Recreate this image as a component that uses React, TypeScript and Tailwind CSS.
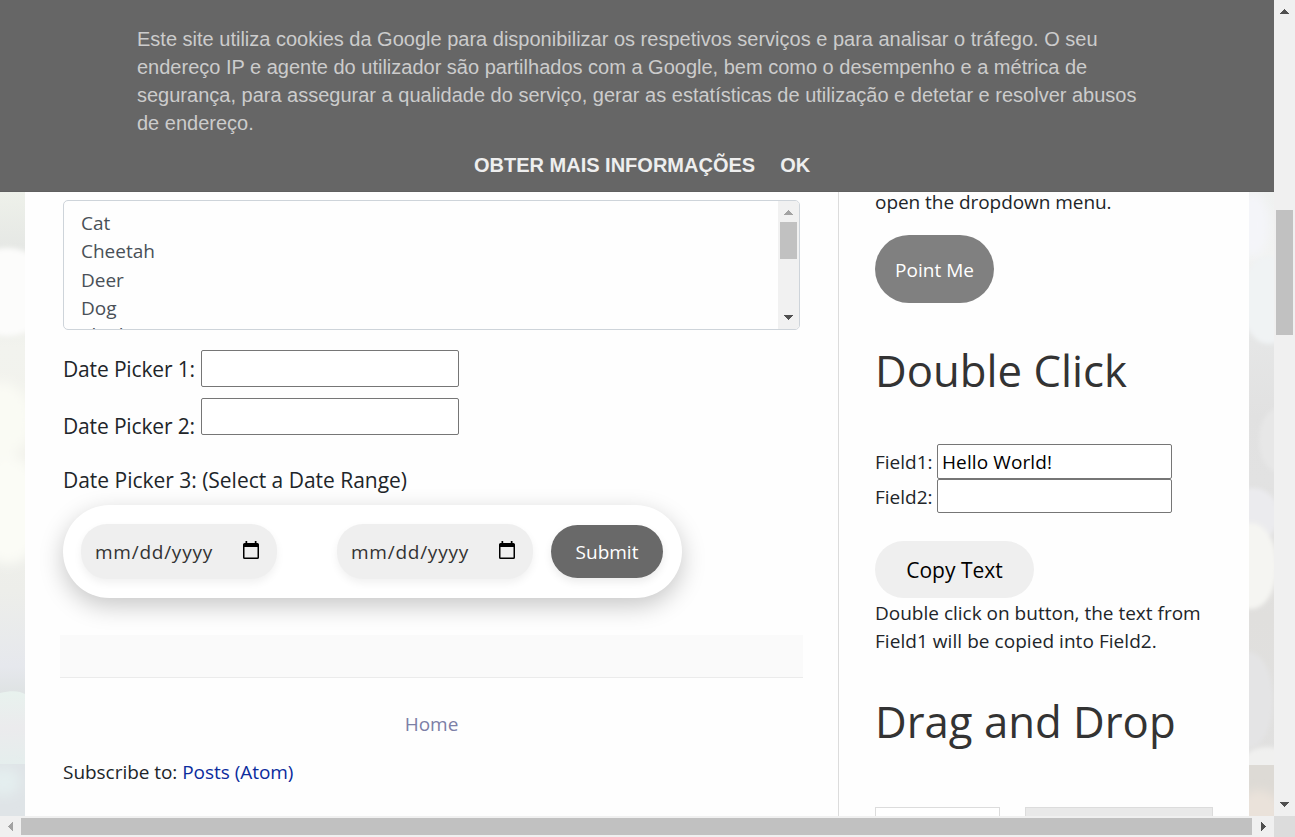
import type { ReactNode } from 'react';

const animals = ['Cat', 'Cheetah', 'Deer', 'Dog'];

function Arrow({ dir, className }: { dir: 'up' | 'down' | 'left' | 'right'; className: string }) {
  const shapes = {
    up: 'M4 0h1v1h1v1h1v1h1v1h1v1H0V4h1V3h1V2h1V1h1z',
    down: 'M0 0h9v1H8v1H7v1H6v1H5v1H4V4H3V3H2V2H1V1H0z',
    left: 'M5 0v9H4V8H3V7H2V6H1V5H0V4h1V3h1V2h1V1h1V0z',
    right: 'M0 0v9h1V8h1V7h1V6h1V5h1V4H4V3H3V2H2V1H1V0z',
  };
  const flat = dir === 'up' || dir === 'down';
  return (
    <svg
      width={flat ? 9 : 5}
      height={flat ? 5 : 9}
      shapeRendering="crispEdges"
      fill="currentColor"
      className={`shrink-0 ${className}`}
    >
      <path d={shapes[dir]} />
    </svg>
  );
}

function CalendarIcon() {
  return (
    <svg width="16" height="18" viewBox="0 0 16 18" fill="none" className="mb-[3px]">
      <path d="M2.5 0h1.7v2h7.6V0h1.7v2H14.4A1.6 1.6 0 0 1 16 3.6v12.8a1.6 1.6 0 0 1-1.6 1.6H1.6A1.6 1.6 0 0 1 0 16.4V3.6A1.6 1.6 0 0 1 1.6 2h.9zM1.5 6v10.5h13V6z" fill="black" />
    </svg>
  );
}

function DateField() {
  return (
    <div className="flex h-[55px] w-[196px] items-center justify-between rounded-[26px] bg-[#efefef] pl-[14px] pr-[18px] text-[19px] tracking-[0.75px] text-[#333] shadow-[0_4px_8px_rgba(0,0,0,0.06)]">
      <span className="pt-[2px]">mm/dd/yyyy</span>
      <CalendarIcon />
    </div>
  );
}

function Heading({ children }: { children: ReactNode }) {
  return <h2 className="h-[60px] text-[43.7px] leading-[60px] text-[#333]">{children}</h2>;
}

function LeftBackdrop() {
  return (
    <svg width="25" height="624" viewBox="0 192 25 624" className="shrink-0">
      <defs>
        <linearGradient id="lb" x1="0" y1="0" x2="0" y2="1">
          <stop offset="0" stopColor="#eef1ea" />
          <stop offset="0.085" stopColor="#e6e8e5" />
          <stop offset="0.25" stopColor="#f2f3ee" />
          <stop offset="0.42" stopColor="#f2f2ec" />
          <stop offset="0.64" stopColor="#edeeea" />
          <stop offset="0.76" stopColor="#e6e8ed" />
          <stop offset="0.8" stopColor="#dfe3e4" />
          <stop offset="1" stopColor="#dfe2e4" />
        </linearGradient>
        <linearGradient id="lc" x1="0" y1="0" x2="0" y2="1">
          <stop offset="0" stopColor="#e8f2ee" />
          <stop offset="0.5" stopColor="#ebebed" />
          <stop offset="1" stopColor="#e5eeed" />
        </linearGradient>
        <filter id="ls" x="-40%" y="-40%" width="180%" height="180%">
          <feGaussianBlur stdDeviation="2.5" />
        </filter>
        <filter id="lw" x="-60%" y="-60%" width="220%" height="220%">
          <feGaussianBlur stdDeviation="6" />
        </filter>
      </defs>
      <rect y="192" width="25" height="624" fill="url(#lb)" />
      <ellipse cx="7" cy="292" rx="44" ry="44" fill="#fcfcfb" filter="url(#ls)" />
      <g filter="url(#lw)">
        <ellipse cx="0" cy="420" rx="32" ry="38" fill="#fafbf4" />
        <ellipse cx="8" cy="510" rx="36" ry="54" fill="#fbfcf6" />
      </g>
      <path d="M0 693C12 690 20 691 25 694V764H0z" fill="url(#lc)" />
      <rect y="764" width="25" height="52" fill="#dfe4e7" />
      <ellipse cx="4" cy="782" rx="16" ry="14" fill="#e4eeef" filter="url(#lw)" />
    </svg>
  );
}

function RightBackdrop() {
  return (
    <svg width="25" height="624" viewBox="0 192 25 624" className="shrink-0">
      <defs>
        <linearGradient id="rb" x1="0" y1="0" x2="0" y2="1">
          <stop offset="0" stopColor="#eff1f0" />
          <stop offset="0.1" stopColor="#f2f3f2" />
          <stop offset="0.22" stopColor="#e6e7e7" />
          <stop offset="0.36" stopColor="#e1e1e1" />
          <stop offset="0.46" stopColor="#e2e2e2" />
          <stop offset="0.68" stopColor="#e0dfdd" />
          <stop offset="1" stopColor="#e1e1e1" />
        </linearGradient>
        <filter id="rs" x="-40%" y="-40%" width="180%" height="180%">
          <feGaussianBlur stdDeviation="2" />
        </filter>
        <filter id="rw" x="-60%" y="-60%" width="220%" height="220%">
          <feGaussianBlur stdDeviation="5" />
        </filter>
      </defs>
      <rect y="192" width="25" height="624" fill="url(#rb)" />
      <ellipse cx="4" cy="225" rx="16" ry="32" fill="#f4f5f9" filter="url(#rw)" />
      <g filter="url(#rs)">
        <ellipse cx="20" cy="300" rx="28" ry="44" fill="#f0f3f4" />
        <ellipse cx="30" cy="440" rx="20" ry="32" fill="#e7e7e7" />
        <ellipse cx="4" cy="515" rx="26" ry="27" fill="#ebebee" />
        <ellipse cx="2" cy="566" rx="26" ry="43" fill="#f5f5f2" />
        <ellipse cx="0" cy="700" rx="24" ry="48" fill="#e4e4e5" />
        <ellipse cx="18" cy="766" rx="26" ry="19" fill="#f0f0ef" />
      </g>
      <rect y="765" width="25" height="51" fill="#dddad5" />
      <ellipse cx="10" cy="812" rx="22" ry="22" fill="#eae2da" filter="url(#rw)" />
    </svg>
  );
}

function CookieBanner() {
  return (
    <div className="h-[192px] w-[1274px] shrink-0 border-b border-[#606060] bg-[#666] pl-[137px] pt-[25px] font-['Liberation_Sans',sans-serif] text-[20px] leading-[28px] text-[#ccc]">
      <p className="w-[1000px] whitespace-nowrap">
        Este site utiliza cookies da Google para disponibilizar os respetivos serviços e para analisar o tráfego. O seu
        <br />
        endereço IP e agente do utilizador são partilhados com a Google, bem como o desempenho e a métrica de
        <br />
        segurança, para assegurar a qualidade do serviço, gerar as estatísticas de utilização e detetar e resolver abusos
        <br />
        de endereço.
      </p>
      <div className="mt-[14px] flex gap-[25px] pl-[337px] font-bold text-[#eee]">
        <a>OBTER MAIS INFORMAÇÕES</a>
        <a>OK</a>
      </div>
    </div>
  );
}

function AnimalList() {
  return (
    <div className="flex h-[130px] w-[737px] shrink-0 overflow-hidden rounded-[5px] border border-[#ced4da]">
      <div className="flex-1 pl-[17px] pt-[8px] text-[19px] leading-[28.4px] text-[#495057]">
        {animals.map((a) => (
          <div key={a}>{a}</div>
        ))}
        <div className="-mt-[2px]">Elephant</div>
      </div>
      <div className="flex w-[21px] flex-col items-center bg-[#f1f1f1]">
        <Arrow dir="up" className="mt-[9px] text-[#a3a3a3]" />
        <div className="mt-[7px] h-[37px] w-[17px] bg-[#c1c1c1]" />
        <Arrow dir="down" className="mb-[9px] mt-auto text-[#505050]" />
      </div>
    </div>
  );
}

function MainColumn() {
  return (
    <main className="flex w-[813px] shrink-0 flex-col pl-[38px] pt-[8px] text-[#212529]">
      <AnimalList />
      <div className="mt-[20px] flex h-[37px] shrink-0 text-[21px] leading-[37px]">
        <label className="w-[138px] pt-px tracking-[-0.15px]">Date Picker 1:</label>
        <div className="h-[37px] w-[258px] rounded-[2px] border border-[#767676] bg-white" />
      </div>
      <div className="mt-[11px] flex h-[46px] shrink-0 text-[21px] leading-[37px]">
        <label className="w-[138px] pt-[10px] tracking-[-0.15px]">Date Picker 2:</label>
        <div className="h-[37px] w-[258px] rounded-[2px] border border-[#767676] bg-white" />
      </div>
      <p className="mt-[20px] h-[32px] text-[21px] leading-[32px] tracking-[-0.02px]">
        Date Picker 3: (Select a Date Range)
      </p>
      <div className="mt-[9px] flex h-[93px] w-[619px] shrink-0 items-center rounded-full bg-white pl-[18px] shadow-[0_8px_25px_rgba(0,0,0,0.22)]">
        <DateField />
        <div className="w-[60px]" />
        <DateField />
        <button className="ml-[18px] h-[53px] w-[112px] rounded-full bg-[#696969] pt-[2px] text-[19px] text-white shadow-[0_4px_8px_rgba(0,0,0,0.08)]">
          Submit
        </button>
      </div>
      <div className="-ml-[3px] mt-[37px] h-[43px] w-[743px] shrink-0 border-b border-[#ebebeb] bg-[#fafafa]" />
      <a className="mt-[32px] w-[737px] text-center text-[19px] leading-[28px] text-[#7c7fa6]">Home</a>
      <p className="mt-[20px] text-[19px] leading-[28px] tracking-[-0.04px]">
        Subscribe to: <a className="text-[#0b2c9d]">Posts (Atom)</a>
      </p>
    </main>
  );
}

function SideColumn() {
  return (
    <aside className="-mt-[4px] flex w-[411px] flex-col items-start border-l border-[#dcdcdc] pl-[36px] text-[19px] leading-[28px] text-[#212529]">
      <p className="tracking-[-0.05px]">open the dropdown menu.</p>
      <button className="mt-[19px] h-[68px] w-[119px] shrink-0 rounded-full bg-[#808080] pt-[2px] text-white">
        Point Me
      </button>
      <div className="mt-[37px]">
        <Heading>Double Click</Heading>
      </div>
      <div className="mt-[44px] flex h-[35px] leading-[35px]">
        <label className="w-[62px] pt-px">Field1:</label>
        <div className="w-[235px] rounded-[2px] border border-[#767676] bg-white pl-[4px] pt-px leading-[33px] tracking-[0.1px] text-black">
          Hello World!
        </div>
      </div>
      <div className="flex h-[34px] leading-[35px]">
        <label className="w-[62px] pt-px">Field2:</label>
        <div className="w-[235px] rounded-[2px] border border-[#767676] bg-white" />
      </div>
      <button className="mt-[28px] h-[57px] w-[159px] shrink-0 rounded-full bg-[#efefef] text-[21px] text-black">
        Copy Text
      </button>
      <p className="mt-px whitespace-nowrap">
        Double click on button, the text from
        <br />
        <span className="tracking-[0.05px]">Field1 will be copied into Field2.</span>
      </p>
      <div className="mt-[36px]">
        <Heading>Drag and Drop</Heading>
      </div>
      <div className="mt-[56px] flex gap-[25px]">
        <div className="h-[60px] w-[125px] border border-[#dcdcdc] bg-white" />
        <div className="h-[60px] w-[188px] border border-[#dcdcdc] bg-[#e9e9e9]" />
      </div>
    </aside>
  );
}

export default function App() {
  return (
    <div className="grid h-[837px] w-[1295px] grid-cols-[1274px_21px] grid-rows-[816px_21px] overflow-hidden bg-white font-['Open_Sans','Noto_Sans',sans-serif]">
      <div className="flex flex-col overflow-hidden">
        <CookieBanner />
        <div className="flex h-[624px] overflow-hidden">
          <LeftBackdrop />
          <div className="flex h-[624px] w-[1224px] shrink-0 overflow-hidden bg-[#fefefe]">
            <MainColumn />
            <SideColumn />
          </div>
          <RightBackdrop />
        </div>
      </div>
      <div className="flex flex-col items-center bg-[#f0f0f0]">
        <Arrow dir="up" className="mt-[9px] text-[#505050]" />
        <div className="mt-[196px] h-[125px] w-[17px] bg-[#c1c1c1]" />
        <Arrow dir="down" className="mb-[9px] mt-auto text-[#505050]" />
      </div>
      <div className="flex items-center bg-[#f0f0f0]">
        <Arrow dir="left" className="ml-[8px] text-[#a3a3a3]" />
        <div className="ml-[8px] h-[17px] w-[1231px] bg-[#c1c1c1]" />
        <Arrow dir="right" className="ml-[9px] text-[#505050]" />
      </div>
      <div className="bg-[#dcdcdc]" />
    </div>
  );
}
